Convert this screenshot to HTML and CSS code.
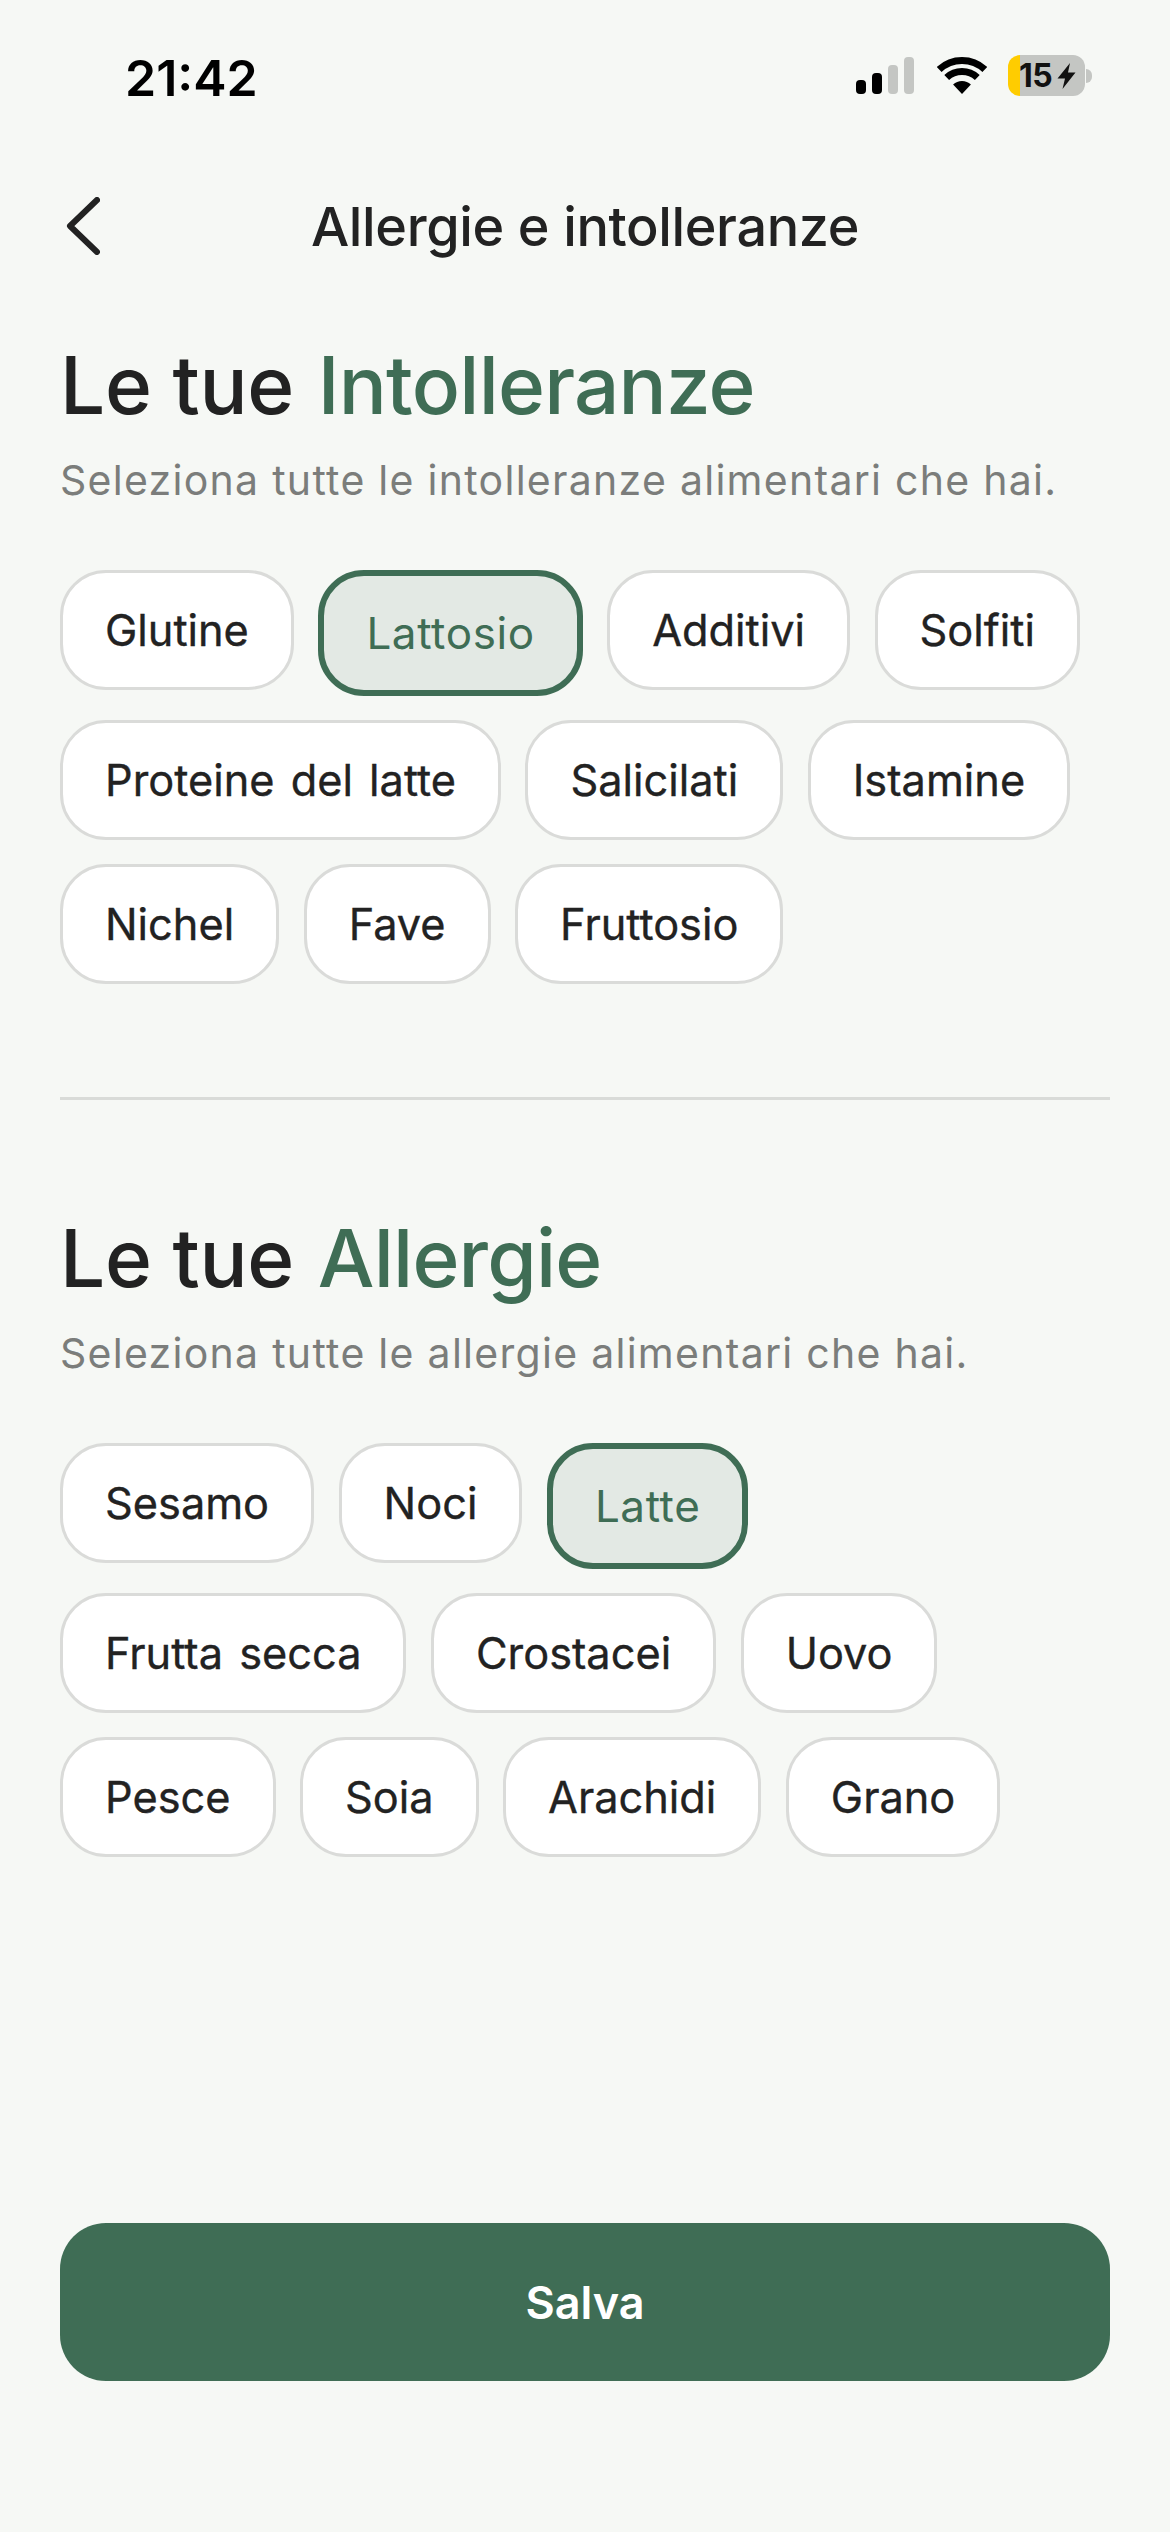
FILE: index.html
```html
<!DOCTYPE html>
<html lang="it">
<head>
  <meta charset="UTF-8">
  <meta name="viewport" content="width=device-width, initial-scale=1.0">
  <title>Allergie e intolleranze</title>
  <link rel="stylesheet" href="styles.css">
</head>
<body>
  <div class="screen">
    <!-- Status bar -->
    <div class="status-bar">
      <span class="time">21:42</span>
      <div class="status-icons">
        <div class="signal">
          <span class="bar bar-1"></span>
          <span class="bar bar-2"></span>
          <span class="bar bar-3"></span>
          <span class="bar bar-4"></span>
        </div>
        <svg class="wifi" width="50" height="37" viewBox="0 0 50 37">
          <path d="M2.2 12.5A33.5 33.5 0 0 1 47.8 12.5" fill="none" stroke="#000" stroke-width="7"/>
          <path d="M9.7 20.5A22.5 22.5 0 0 1 40.3 20.5" fill="none" stroke="#000" stroke-width="7"/>
          <path d="M25 37L16.1 27.5A13 13 0 0 1 33.9 27.5Z" fill="#000"/>
        </svg>
        <div class="battery">
          <div class="battery-body">
            <span class="battery-level">15</span>
            <svg class="bolt" width="19" height="26" viewBox="0 0 18 26">
              <path d="M12.5 0L0 15.5H7.5L5 26L18 9.5H10.5Z" fill="#111"/>
            </svg>
          </div>
          <span class="battery-nub"></span>
        </div>
      </div>
    </div>

    <!-- Header -->
    <div class="header">
      <button class="back-btn" aria-label="Indietro">
        <svg width="34" height="58" viewBox="0 0 34 58">
          <path d="M31 3L4 29L31 55" fill="none" stroke="#222" stroke-width="6" stroke-linecap="round" stroke-linejoin="round"/>
        </svg>
      </button>
      <h1 class="title">Allergie e intolleranze</h1>
    </div>

    <!-- Intolleranze -->
    <section class="section">
      <h2>Le tue <span class="accent">Intolleranze</span></h2>
      <p class="hint">Seleziona tutte le intolleranze alimentari che hai.</p>
      <div class="chips">
        <span class="chip">Glutine</span>
        <span class="chip selected">Lattosio</span>
        <span class="chip">Additivi</span>
        <span class="chip">Solfiti</span>
        <span class="chip">Proteine del latte</span>
        <span class="chip">Salicilati</span>
        <span class="chip">Istamine</span>
        <span class="chip">Nichel</span>
        <span class="chip">Fave</span>
        <span class="chip">Fruttosio</span>
      </div>
    </section>

    <hr class="divider">

    <!-- Allergie -->
    <section class="section">
      <h2>Le tue <span class="accent">Allergie</span></h2>
      <p class="hint">Seleziona tutte le allergie alimentari che hai.</p>
      <div class="chips">
        <span class="chip">Sesamo</span>
        <span class="chip">Noci</span>
        <span class="chip selected">Latte</span>
        <span class="chip">Frutta secca</span>
        <span class="chip">Crostacei</span>
        <span class="chip">Uovo</span>
        <span class="chip">Pesce</span>
        <span class="chip">Soia</span>
        <span class="chip">Arachidi</span>
        <span class="chip">Grano</span>
      </div>
    </section>

    <button class="save-btn">Salva</button>
  </div>
</body>
</html>
```

FILE: styles.css
```css
* {
  box-sizing: border-box;
}
body {
  margin: 0;
  padding: 0;
  background-color: #f6f8f5;
  color: #222;
  font-family: Inter, "Noto Sans", sans-serif;
}
.screen {
  display: flex;
  flex-direction: column;
  height: 2532px;
  padding: 0 60px 151px;
  overflow: hidden;
}

/* Status bar */
.status-bar {
  display: flex;
  justify-content: space-between;
  align-items: flex-start;
  height: 197px;
  padding-top: 48px;
}
.time {
  margin-left: 65px;
  font-size: 50px;
  line-height: 60px;
  font-weight: 600;
  color: #000;
}
.status-icons {
  display: flex;
  align-items: flex-start;
  margin-top: 9px;
  margin-right: 18px;
}
.signal {
  display: flex;
  align-items: flex-end;
  gap: 6px;
  height: 37px;
  margin-right: 23px;
}
.bar {
  width: 10px;
  border-radius: 4px;
  background-color: #000;
}
.bar-1 { height: 14px; }
.bar-2 { height: 21px; }
.bar-3 { height: 29px; background-color: #c4c6c3; }
.bar-4 { height: 37px; background-color: #c4c6c3; }
.wifi {
  margin-right: 21px;
}
.battery {
  display: flex;
  align-items: center;
  margin-top: -2px;
}
.battery-body {
  display: flex;
  align-items: center;
  gap: 5px;
  width: 77px;
  height: 41px;
  padding-left: 11px;
  border-radius: 12px;
  background: linear-gradient(90deg, #ffcc00 12px, #c4c6c3 12px);
}
.battery-level {
  font-size: 32px;
  line-height: 41px;
  font-weight: 700;
  letter-spacing: -0.5px;
  color: #111;
}
.battery-nub {
  width: 6px;
  height: 14px;
  margin-left: 1px;
  border-radius: 0 7px 7px 0;
  background-color: #c4c6c3;
}

/* Header */
.header {
  display: flex;
  justify-content: center;
  position: relative;
  height: 59px;
  margin-bottom: 81px;
}
.back-btn {
  position: absolute;
  left: 6px;
  top: 0;
  padding: 0;
  border: none;
  background: none;
}
.title {
  margin: 0;
  font-size: 54px;
  line-height: 59px;
  font-weight: 500;
  letter-spacing: -0.37px;
  color: #222;
}

/* Sections */
.section h2 {
  margin: 0 0 22px;
  font-size: 80px;
  line-height: 96px;
  font-weight: 500;
  letter-spacing: -0.35px;
  color: #222;
}
.accent {
  margin-left: 3px;
  letter-spacing: -0.8px;
  color: #3f6d55;
}
.hint {
  margin: 0 0 65px;
  font-size: 41px;
  line-height: 50px;
  letter-spacing: 1.28px;
  color: #7b7d7b;
}
.chips {
  display: flex;
  flex-wrap: wrap;
  align-items: flex-start;
  gap: 24px 24.5px;
}
.chip {
  padding: 32px 42px;
  border: 3px solid #dadbd9;
  border-radius: 46px;
  background-color: #fff;
  font-size: 43.3px;
  line-height: 50px;
  font-weight: 400;
  word-spacing: 4px;
  -webkit-text-stroke: 0.35px #222;
  color: #222;
}
.chip.selected {
  border: 6px solid #3f6d55;
  background-color: #e3e9e4;
  font-size: 44px;
  letter-spacing: 0.6px;
  -webkit-text-stroke: 0;
  color: #3f6d55;
}
.divider {
  width: 100%;
  height: 3px;
  margin: 113px 0 110px;
  border: none;
  background-color: #d9dbd8;
}

/* Save button */
.save-btn {
  margin-top: auto;
  height: 158px;
  border: none;
  border-radius: 46px;
  background-color: #3f6d55;
  color: #fff;
  font-family: Inter, "Noto Sans", sans-serif;
  font-size: 45px;
  font-weight: 600;
}
```
